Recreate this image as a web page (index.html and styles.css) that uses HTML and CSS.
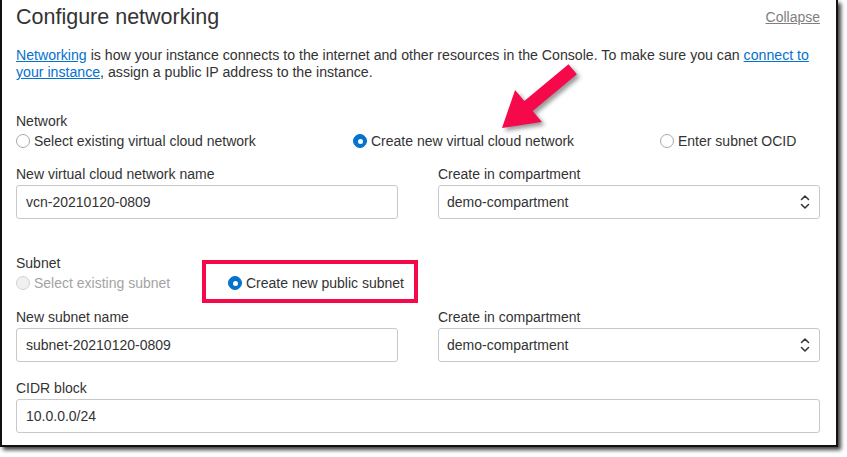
FILE: index.html
```html
<!DOCTYPE html>
<html lang="en">
<head>
<meta charset="utf-8">
<title>Configure networking</title>
<link rel="stylesheet" href="styles.css">
</head>
<body>
<div class="frame">
  <div class="header">
    <h2 class="title">Configure networking</h2>
    <a class="collapse" href="#">Collapse</a>
  </div>
  <p class="intro"><a class="link" href="#">Networking</a> is how your instance connects to the internet and other resources in the Console. To make sure you can <a class="link" href="#">connect to<br>your instance</a>, assign a public IP address to the instance.</p>

  <div class="group net-group">
    <div class="group-label">Network</div>
    <div class="radios">
      <label class="radio w1"><span class="dot"></span><span>Select existing virtual cloud network</span></label>
      <label class="radio w2"><span class="dot checked"></span><span>Create new virtual cloud network</span></label>
      <label class="radio"><span class="dot"></span><span>Enter subnet OCID</span></label>
    </div>
    <div class="fields first-fields">
      <div class="field">
        <div class="field-label">New virtual cloud network name</div>
        <div class="input">vcn-20210120-0809</div>
      </div>
      <div class="field">
        <div class="field-label">Create in compartment</div>
        <div class="input select"><span>demo-compartment</span>
          <svg class="chev" width="10" height="16" viewBox="0 0 10 16"><path d="M1.5 5.5 L5 2 L8.5 5.5 M1.5 10.5 L5 14 L8.5 10.5" fill="none" stroke="#333" stroke-width="1.5" stroke-linecap="round" stroke-linejoin="round"/></svg>
        </div>
      </div>
    </div>
  </div>

  <div class="group sub-group">
    <div class="group-label">Subnet</div>
    <div class="radios">
      <label class="radio w-sub disabled"><span class="dot"></span><span>Select existing subnet</span></label>
      <label class="radio highlighted"><span class="dot checked"></span><span>Create new public subnet</span></label>
    </div>
    <div class="fields second-fields">
      <div class="field">
        <div class="field-label">New subnet name</div>
        <div class="input">subnet-20210120-0809</div>
      </div>
      <div class="field">
        <div class="field-label">Create in compartment</div>
        <div class="input select"><span>demo-compartment</span>
          <svg class="chev" width="10" height="16" viewBox="0 0 10 16"><path d="M1.5 5.5 L5 2 L8.5 5.5 M1.5 10.5 L5 14 L8.5 10.5" fill="none" stroke="#333" stroke-width="1.5" stroke-linecap="round" stroke-linejoin="round"/></svg>
        </div>
      </div>
    </div>
    <div class="field cidr">
      <div class="field-label">CIDR block</div>
      <div class="input">10.0.0.0/24</div>
    </div>
  </div>
</div>
<svg class="arrow" width="847" height="457" viewBox="0 0 847 457">
  <polygon points="502,128 541.9,122.1 532.7,111 576.9,74.2 568.5,64.2 524.3,101 515.1,89.9" fill="#f5094b"/>
</svg>
</body>
</html>
```
FILE: styles.css
```css
html, body {
  margin: 0;
  padding: 0;
  background: #fff;
}
body {
  position: relative;
  width: 847px;
  height: 457px;
  overflow: hidden;
  font-family: "Liberation Sans", Arial, Helvetica, sans-serif;
  font-size: 14px;
  line-height: 17px;
  color: #333;
}
.frame {
  box-sizing: border-box;
  width: 838px;
  height: 447px;
  border: 2px solid #111;
  border-top: none;
  box-shadow: 3px 3px 4px rgba(0, 0, 0, 0.75);
  padding: 4px 16px 0 14px;
  background: #fff;
}
.header {
  display: flex;
  justify-content: space-between;
  align-items: flex-start;
  height: 26px;
}
.title {
  margin: 0;
  font-weight: normal;
  font-size: 21.5px;
  line-height: 26px;
  color: #333;
}
.collapse {
  margin-top: 5px;
  color: #808080;
  text-decoration: underline;
}
.intro {
  margin: 17px 0 0;
  font-size: 14.15px;
  line-height: 17px;
}
.link {
  color: #0572ce;
  text-decoration: underline;
}
.net-group {
  margin-top: 32px;
}
.sub-group {
  margin-top: 36px;
}
.group-label {
  line-height: 17px;
}
.radios {
  display: flex;
  margin-top: 1px;
  height: 20px;
  align-items: center;
}
.radio {
  display: flex;
  align-items: center;
  line-height: 20px;
  position: relative;
}
.w1 { width: 337px; }
.w2 { width: 307px; }
.w-sub { width: 212px; }
.dot {
  box-sizing: border-box;
  width: 14px;
  height: 14px;
  border-radius: 50%;
  border: 1px solid #a8a8a8;
  background: #fff;
  margin-right: 4px;
  flex: none;
  position: relative;
}
.dot.checked {
  background: #0572ce;
  border-color: #0572ce;
}
.dot.checked::after {
  content: "";
  position: absolute;
  left: 3.5px;
  top: 3.5px;
  width: 5px;
  height: 5px;
  border-radius: 50%;
  background: #fff;
}
.disabled {
  color: #a3a3a3;
}
.disabled .dot {
  background: #f0f0f0;
  border-color: #d2d2d2;
}
.highlighted::before {
  content: "";
  position: absolute;
  left: -26px;
  top: -13px;
  width: 216px;
  height: 43px;
  box-sizing: border-box;
  border: 4px solid #f5094b;
}
.fields {
  display: grid;
  grid-template-columns: 1fr 1fr;
  column-gap: 40px;
}
.first-fields {
  margin-top: 15px;
}
.second-fields {
  margin-top: 16px;
}
.cidr {
  margin-top: 18px;
}
.field-label {
  line-height: 17px;
}
.input {
  box-sizing: border-box;
  margin-top: 2px;
  height: 34px;
  border: 1px solid #c8c8c8;
  border-radius: 3px;
  padding: 0 9px;
  display: flex;
  align-items: center;
  background: #fff;
  color: #333;
}
.select {
  padding: 0 9px 0 8px;
  justify-content: space-between;
}
.chev {
  display: block;
}
.arrow {
  position: absolute;
  left: 0;
  top: 0;
  pointer-events: none;
  filter: drop-shadow(3px 3px 2px rgba(0, 0, 0, 0.4));
}
```
